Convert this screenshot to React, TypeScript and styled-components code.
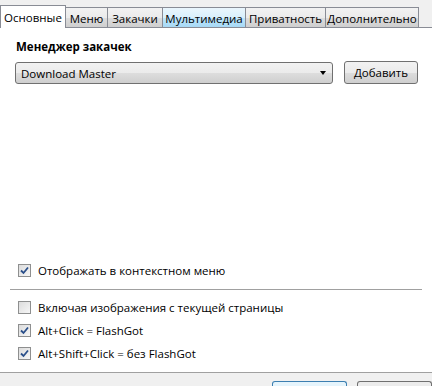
import React from "react"
import styled, { createGlobalStyle } from "styled-components"

const font = "'Segoe UI', 'Open Sans', 'Noto Sans', sans-serif"

const GlobalStyle = createGlobalStyle`
  html, body {
    margin: 0;
    padding: 0;
    background: #f0f0f0;
  }
  body {
    font-family: ${font};
    font-size: 11.5px;
    color: #000;
  }
`

const Window = styled.div`
  width: 432px;
  height: 386px;
  display: flex;
  flex-direction: column;
  overflow: hidden;
  background: #f0f0f0;
`

const TabBar = styled.div`
  display: flex;
  align-items: flex-end;
  height: 27px;
  padding-left: 1px;
  border-bottom: 1px solid #898c95;
`

const Tab = styled.div<{ $active?: boolean; $hover?: boolean; $w: number }>`
  width: ${p => p.$w}px;
  height: ${p => (p.$active ? 23 : 20)}px;
  box-sizing: border-box;
  display: flex;
  align-items: center;
  justify-content: center;
  font-size: 11.5px;
  border: 1px solid #898c95;
  border-bottom: none;
  margin-left: -1px;
  margin-bottom: ${p => (p.$active ? -1 : 0)}px;
  position: relative;
  z-index: ${p => (p.$active ? 2 : 1)};
  background: ${p =>
    p.$active
      ? "#fff"
      : p.$hover
      ? "linear-gradient(#eaf6fd, #d9f0fc 50%, #bee6fd 51%, #a7d9f5)"
      : "linear-gradient(#f2f2f2, #ebebeb 50%, #dddddd 51%, #cfcfcf)"};
  padding-top: ${p => (p.$active ? 0 : 1)}px;
`

const Panel = styled.div`
  flex: 1;
  background: #fff;
  display: flex;
  flex-direction: column;
  padding: 11px 10px 0 15px;
  border-bottom: 1px solid #a0a0a0;
`

const Heading = styled.div`
  font-weight: bold;
  margin-left: 1px;
  line-height: 16px;
`

const ManagerRow = styled.div`
  display: flex;
  align-items: center;
  margin-top: 7px;
`

const Select = styled.div`
  width: 318px;
  height: 22px;
  box-sizing: border-box;
  border: 1px solid #707070;
  border-radius: 3px;
  background: linear-gradient(#f2f2f2, #ebebeb 50%, #dddddd 51%, #cfcfcf);
  display: flex;
  align-items: center;
  justify-content: space-between;
  padding: 0 6px 0 5px;
`

const Arrow = styled.span`
  width: 0;
  height: 0;
  border-left: 3px solid transparent;
  border-right: 3px solid transparent;
  border-top: 4px solid #000;
`

const Button = styled.div`
  margin-left: 11px;
  width: 74px;
  height: 23px;
  box-sizing: border-box;
  border: 1px solid #707070;
  border-radius: 3px;
  background: linear-gradient(#f2f2f2, #ebebeb 50%, #dddddd 51%, #cfcfcf);
  display: flex;
  align-items: center;
  justify-content: center;
  margin-top: -2px;
`

const Spacer = styled.div`
  flex: 1;
`

const CheckRow = styled.label<{ $gap?: number }>`
  display: flex;
  align-items: center;
  height: 16px;
  margin-left: 3px;
  margin-bottom: ${p => p.$gap ?? 0}px;
`

const Box = styled.span`
  width: 13px;
  height: 13px;
  box-sizing: border-box;
  border: 1px solid #8e8f8f;
  background: linear-gradient(135deg, #dcdcdc, #f6f6f6);
  display: flex;
  align-items: center;
  justify-content: center;
  margin-right: 7px;
  flex: none;
`

const Divider = styled.div`
  height: 1px;
  background: #a0a0a0;
  margin: 11px 0 9px -5px;
`

const Footer = styled.div`
  height: 13px;
  display: flex;
  justify-content: flex-end;
  align-items: flex-end;
  gap: 10px;
`

const FooterButton = styled.div<{ $primary?: boolean }>`
  width: 75px;
  height: 5px;
  box-sizing: border-box;
  border: 1px solid ${p => (p.$primary ? "#3c7fb1" : "#707070")};
  border-bottom: none;
  border-radius: 3px 3px 0 0;
  background: ${p => (p.$primary ? "#e5f4fc" : "#ececec")};
`

const Check = () => (
  <svg width="9" height="9" viewBox="0 0 9 9">
    <path d="M1 4.5 L3.5 7 L8 1.5" fill="none" stroke="#2a4f8a" strokeWidth="1.8" />
  </svg>
)

const Checkbox = ({ checked, label, gap }: { checked?: boolean; label: string; gap?: number }) => (
  <CheckRow $gap={gap}>
    <Box>{checked && <Check />}</Box>
    {label}
  </CheckRow>
)

const tabs = [
  { name: "Основные", w: 66, active: true },
  { name: "Меню", w: 43 },
  { name: "Закачки", w: 56 },
  { name: "Мультимедиа", w: 84, hover: true },
  { name: "Приватность", w: 81 },
  { name: "Дополнительно", w: 94 },
]

export default function App() {
  return (
    <Window>
      <GlobalStyle />
      <TabBar>
        {tabs.map(t => (
          <Tab key={t.name} $w={t.w} $active={t.active} $hover={t.hover}>
            {t.name}
          </Tab>
        ))}
      </TabBar>
      <Panel>
        <Heading>Менеджер закачек</Heading>
        <ManagerRow>
          <Select>
            <span>Download Master</span>
            <Arrow />
          </Select>
          <Button>Добавить</Button>
        </ManagerRow>
        <Spacer />
        <Checkbox checked label="Отображать в контекстном меню" />
        <Divider />
        <Checkbox label="Включая изображения с текущей страницы" gap={7} />
        <Checkbox checked label="Alt+Click = FlashGot" gap={7} />
        <Checkbox checked label="Alt+Shift+Click = без FlashGot" gap={11} />
      </Panel>
      <Footer>
        <FooterButton $primary />
        <FooterButton />
      </Footer>
    </Window>
  )
}
